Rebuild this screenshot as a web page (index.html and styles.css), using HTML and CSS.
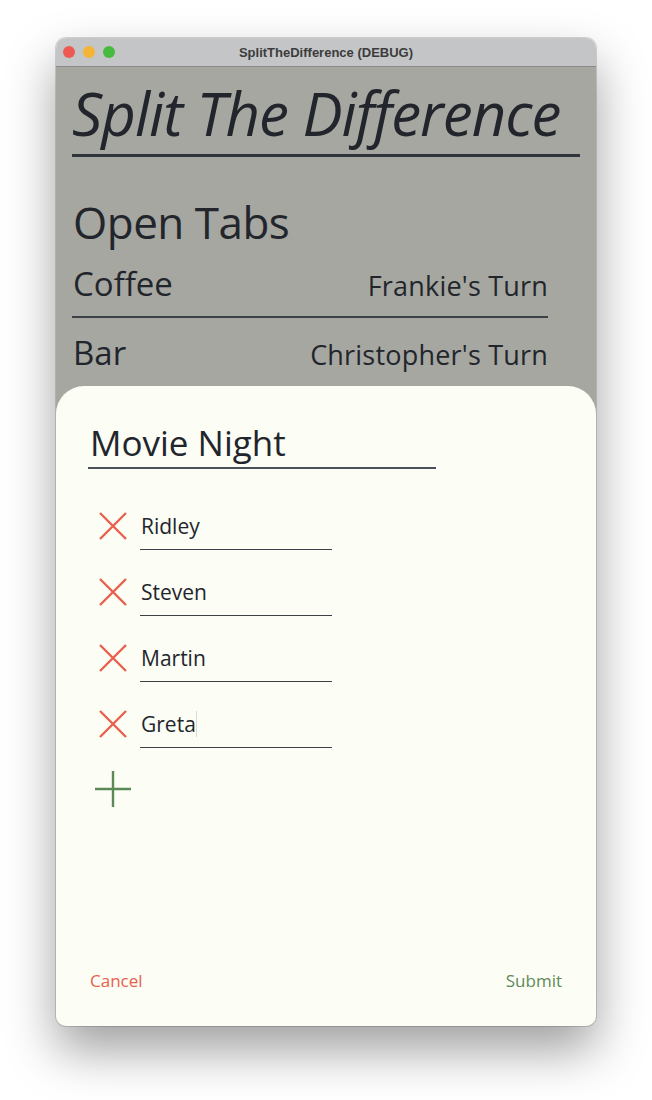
FILE: index.html
```html
<!DOCTYPE html>
<html lang="en">
<head>
    <meta charset="UTF-8">
    <title>SplitTheDifference (DEBUG)</title>
    <link rel="stylesheet" href="styles.css">
</head>
<body>

<div class="window">
    <div class="titlebar">
        <div class="lights">
            <span class="light red"></span>
            <span class="light yellow"></span>
            <span class="light green"></span>
        </div>
        <div class="window-title">SplitTheDifference (DEBUG)</div>
    </div>

    <div class="app">
        <h1 class="app-title">Split The Difference</h1>

        <h2 class="section-title">Open Tabs</h2>
        <div class="tabs">
            <div class="tab-row">
                <span class="tab-name">Coffee</span>
                <span class="tab-turn">Frankie's Turn</span>
            </div>
            <div class="tab-row">
                <span class="tab-name">Bar</span>
                <span class="tab-turn">Christopher's Turn</span>
            </div>
        </div>

        <div class="sheet">
            <div class="tab-field">Movie Night</div>

            <div class="people">
                <div class="person">
                    <svg class="icon-remove" viewBox="0 0 36 36"><path d="M5 5L31 31M31 5L5 31"/></svg>
                    <div class="person-field">Ridley</div>
                </div>
                <div class="person">
                    <svg class="icon-remove" viewBox="0 0 36 36"><path d="M5 5L31 31M31 5L5 31"/></svg>
                    <div class="person-field">Steven</div>
                </div>
                <div class="person">
                    <svg class="icon-remove" viewBox="0 0 36 36"><path d="M5 5L31 31M31 5L5 31"/></svg>
                    <div class="person-field">Martin</div>
                </div>
                <div class="person">
                    <svg class="icon-remove" viewBox="0 0 36 36"><path d="M5 5L31 31M31 5L5 31"/></svg>
                    <div class="person-field">Greta<span class="caret"></span></div>
                </div>
                <svg class="icon-add" viewBox="0 0 36 36"><path d="M18 0V36M0 18H36"/></svg>
            </div>

            <div class="sheet-actions">
                <span class="btn-cancel">Cancel</span>
                <span class="btn-submit">Submit</span>
            </div>
        </div>
    </div>
</div>

</body>
</html>
```

FILE: styles.css
```css
body, html {
    margin: 0;
    padding: 0;
    background: #ffffff;
    font-family: 'Open Sans', sans-serif;
}

body {
    padding: 38px 56px 0;
    min-height: 1100px;
    box-sizing: border-box;
}

.window {
    width: 540px;
    height: 988px;
    border-radius: 10px;
    overflow: hidden;
    box-shadow: 0 24px 50px rgba(0,0,0,0.38), 0 0 0 1px rgba(0,0,0,0.15);
    display: flex;
    flex-direction: column;
}

.titlebar {
    height: 28px;
    background: #c4c5c7;
    border-bottom: 1px solid #8a8a8a;
    display: flex;
    align-items: center;
    position: relative;
    flex-shrink: 0;
}

.lights {
    display: flex;
    gap: 8px;
    padding-left: 7px;
}

.light {
    width: 12px;
    height: 12px;
    border-radius: 50%;
}

.light.red { background: #ee5a52; }
.light.yellow { background: #f4b536; }
.light.green { background: #46bb3f; }

.window-title {
    position: absolute;
    left: 0;
    right: 0;
    text-align: center;
    font-family: 'Liberation Sans', sans-serif;
    font-weight: bold;
    font-size: 13px;
    color: #3c3c3c;
}

.app {
    flex: 1;
    background: #a6a7a0;
    position: relative;
    padding: 14px 16px 0;
    color: #22262c;
    overflow: hidden;
}

.app-title {
    margin: 0;
    font-style: italic;
    font-weight: normal;
    font-size: 60px;
    line-height: 64px;
    letter-spacing: -1px;
    border-bottom: 3px solid #2f333a;
    padding-bottom: 9px;
}

.section-title {
    margin: 37px 0 0 1px;
    font-weight: normal;
    font-size: 44px;
    line-height: 56px;
    letter-spacing: -0.5px;
}

.tabs {
    width: 476px;
}

.tab-row {
    display: flex;
    justify-content: space-between;
    align-items: baseline;
    height: 66px;
    box-sizing: border-box;
    padding-top: 11px;
}

.tab-row + .tab-row {
    height: 69px;
    border-top: 2px solid #3c4047;
    padding-top: 12px;
}

.tab-name {
    font-size: 33px;
    padding-left: 1px;
}

.tab-turn {
    font-size: 27px;
    letter-spacing: 0.2px;
}

.sheet {
    position: absolute;
    left: 0;
    right: 0;
    bottom: 0;
    height: 640px;
    background: #fcfdf5;
    border-radius: 28px 28px 0 0;
    padding: 33px 34px 0 32px;
    box-sizing: border-box;
    display: flex;
    flex-direction: column;
}

.tab-field {
    width: 348px;
    font-size: 35px;
    line-height: 48px;
    border-bottom: 2px solid #4a5058;
    padding-left: 2px;
    box-sizing: border-box;
}

.people {
    margin-top: 35px;
    display: flex;
    flex-direction: column;
    gap: 20px;
}

.person {
    display: flex;
    align-items: flex-start;
    gap: 9px;
    height: 46px;
}

.icon-remove {
    width: 36px;
    height: 36px;
    margin-left: 7px;
    margin-top: 4px;
    fill: none;
    stroke: #e9604c;
    stroke-width: 2.4;
}

.person-field {
    width: 192px;
    height: 46px;
    box-sizing: border-box;
    font-size: 21px;
    line-height: 38px;
    padding: 3px 0 0 1px;
    border-bottom: 1px solid #3c4047;
}

.caret {
    display: inline-block;
    width: 1px;
    height: 26px;
    vertical-align: -5px;
    background: #d8d9d2;
}

.icon-add {
    width: 36px;
    height: 36px;
    margin-left: 7px;
    margin-top: 3px;
    fill: none;
    stroke: #5b8a57;
    stroke-width: 2.4;
}

.sheet-actions {
    margin-top: auto;
    height: 57px;
    display: flex;
    justify-content: space-between;
    font-size: 17px;
}

.btn-cancel {
    color: #e9604c;
    padding-left: 2px;
}

.btn-submit {
    color: #5e8a5a;
}
```
